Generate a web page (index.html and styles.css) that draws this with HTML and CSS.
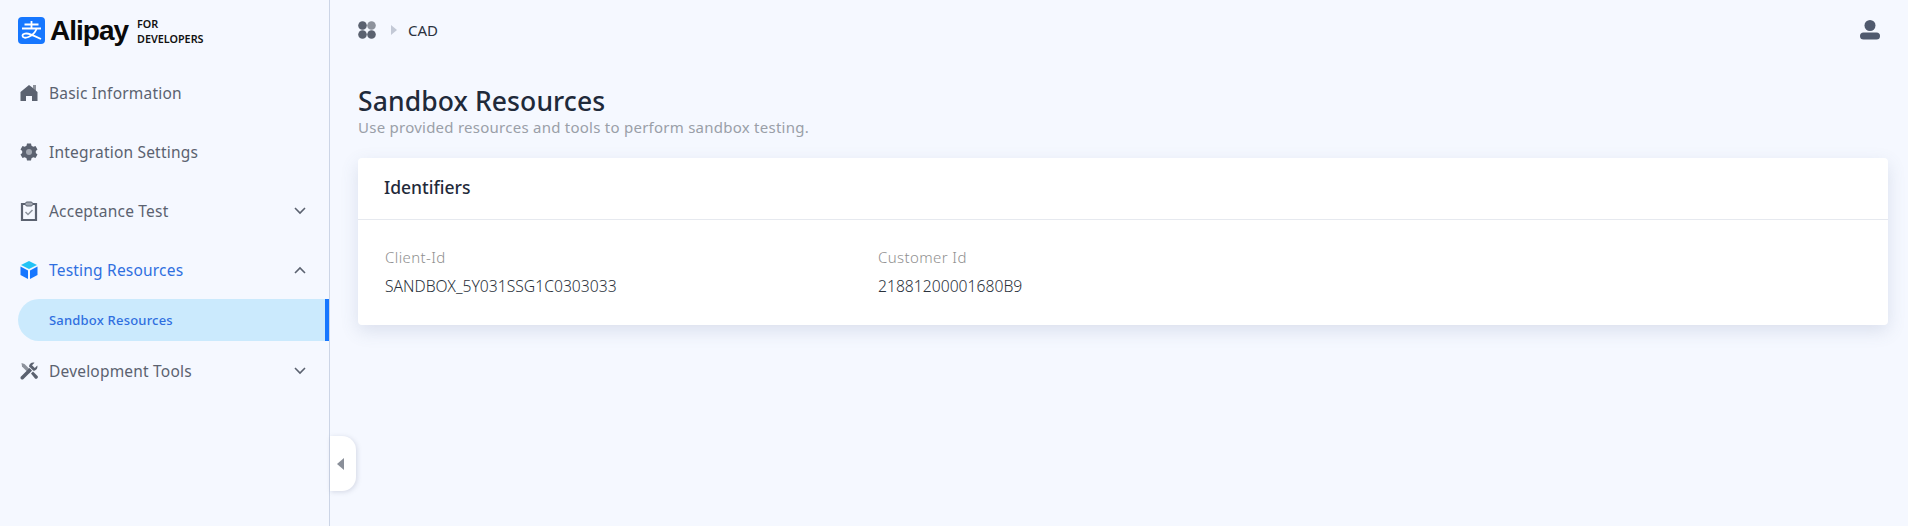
FILE: index.html
```html
<!DOCTYPE html>
<html lang="en">
  <head>
    <meta charset="utf-8">
    <meta name="viewport" content="width=device-width, initial-scale=1" />
    <title>Sandbox Resources | Alipay for Developers</title>
    <link rel="stylesheet" href="styles.css">
  </head>
  <body>
    <aside class="sidebar">
      <div class="logo">
        <svg class="logo-mark" width="27" height="27" viewBox="0 0 27 27">
          <rect width="27" height="27" rx="4" fill="#1677ff"/>
          <path d="M13.500 4v8M6.500 7.500h14M4 11.500h19" stroke="#fff" stroke-width="1.800" fill="none"/>
          <path d="M18.500 12c-1.500 4-4.500 6.500-8 8-2.800 1.200-6 1-6-1.200 0-2.300 4-3 8-1.500 3.500 1.300 7.500 3.200 10.500 4.700" stroke="#fff" stroke-width="1.800" fill="none"/>
        </svg>
        <span class="logo-name">Alipay</span>
        <span class="logo-sub">FOR<br>DEVELOPERS</span>
      </div>

      <nav class="menu">
        <a class="menu-item">
          <svg class="menu-icon" width="18" height="18" viewBox="0 0 18 18"><path d="M9 1 0.500 8V17h5.500v-5h6v5h5.500V8L16 6.800V1h-3v3z" fill="#5b6270"/><path d="M13 1h3v5.800L13 4.300z" fill="#8d929c"/></svg>
          <span>Basic Information</span>
        </a>
        <a class="menu-item">
          <svg class="menu-icon" width="18" height="18" viewBox="0 0 18 18"><path d="M7 .5h4l.5 2.300 1.800 1 2.200-.7 2 3.400-1.700 1.600v1.800l1.700 1.600-2 3.400-2.200-.7-1.800 1-.5 2.300H7l-.5-2.300-1.800-1-2.200.7-2-3.400 1.700-1.600V8.100L.5 6.500l2-3.400 2.200.7 1.800-1z" fill="#5b6270"/><circle cx="9" cy="9" r="3" fill="#a3a8b2"/></svg>
          <span>Integration Settings</span>
        </a>
        <a class="menu-item">
          <svg class="menu-icon" width="18" height="20" viewBox="0 0 18 20"><path d="M5 3H2v16h14V3h-3" fill="none" stroke="#5b6270" stroke-width="2.200"/><rect x="5.500" y="1" width="7" height="4" rx="1.500" fill="#a3a8b2" stroke="#5b6270"/><path d="m5.500 11 2.500 2.500 4.500-4.500" fill="none" stroke="#8d929c" stroke-width="1.500"/></svg>
          <span>Acceptance Test</span>
          <svg class="chevron" width="12" height="8" viewBox="0 0 12 8"><path d="m1 1 5 5 5-5" fill="none" stroke="#5b6270" stroke-width="1.600"/></svg>
        </a>
        <a class="menu-item menu-item-open">
          <svg class="menu-icon" width="18" height="18" viewBox="0 0 18 18"><path d="M9 0 17 4 9 8 1 4z" fill="#22c3f5"/><path d="M.5 5.500 8 9.500V18L.5 14z" fill="#1677ff"/><path d="M17.500 5.500 10 9.500V18l7.500-4z" fill="#1677ff"/></svg>
          <span>Testing Resources</span>
          <svg class="chevron" width="12" height="8" viewBox="0 0 12 8"><path d="m1 7 5-5 5 5" fill="none" stroke="#5b6270" stroke-width="1.600"/></svg>
        </a>
        <a class="submenu-item">Sandbox Resources</a>
        <a class="menu-item">
          <svg class="menu-icon" width="18" height="18" viewBox="0 0 18 18"><path d="M1.500 1 4.500 2l7 7-2.500 2.500-7-7z" fill="#8d929c"/><path d="M1 14.500 9.500 6l2.500 2.500L3.500 17c-.7.7-1.800.7-2.500 0s-.7-1.800 0-2.500z" fill="#5b6270"/><path d="M9 4.500C9 2 11.500 0 14.500.7l-2.500 2.500 2.800 2.800L17.300 3.500C18 6.300 16 8.800 13.500 8.800z" fill="#5b6270"/><path d="m11 11.500 2-2 4.500 4.500c.6.600.6 1.400 0 2l-.5.500c-.6.600-1.400.6-2 0z" fill="#5b6270"/></svg>
          <span>Development Tools</span>
          <svg class="chevron" width="12" height="8" viewBox="0 0 12 8"><path d="m1 1 5 5 5-5" fill="none" stroke="#5b6270" stroke-width="1.600"/></svg>
        </a>
      </nav>

      <button class="collapse" type="button"><span class="collapse-arrow"></span></button>
    </aside>

    <main class="content">
      <header class="topbar">
        <div class="crumbs">
          <svg width="18" height="18" viewBox="0 0 18 18">
            <circle cx="4.500" cy="4.500" r="4.300" fill="#5b6270"/>
            <circle cx="13.500" cy="4.500" r="4.300" fill="#8d929c"/>
            <circle cx="4.500" cy="13.500" r="4.300" fill="#5b6270"/>
            <circle cx="13.500" cy="13.500" r="4.300" fill="#5b6270"/>
          </svg>
          <span class="crumb-arrow"></span>
          <span class="crumb">CAD</span>
        </div>
        <svg class="user" width="20" height="20" viewBox="0 0 20 20">
          <circle cx="10" cy="5.500" r="5.500" fill="#505a6e"/>
          <rect x="0" y="12.500" width="20" height="7" rx="3.500" fill="#505a6e"/>
        </svg>
      </header>

      <h1 class="page-title">Sandbox Resources</h1>
      <p class="page-desc">Use provided resources and tools to perform sandbox testing.</p>

      <section class="card">
        <h2 class="card-title">Identifiers</h2>
        <div class="card-body">
          <div class="field">
            <div class="field-label">Client-Id</div>
            <div class="field-value">SANDBOX_5Y031SSG1C0303033</div>
          </div>
          <div class="field">
            <div class="field-label">Customer Id</div>
            <div class="field-value">21881200001680B9</div>
          </div>
        </div>
      </section>
    </main>
  </body>
</html>
```

FILE: styles.css
```css
html, body{
  height: 100%;
}

body{
  margin: 0;
  display: flex;
  min-height: 526px;
  background: #f5f8ff;
  font-family: "Noto Sans", "Open Sans", sans-serif;
  color: #1f2937;
  overflow: hidden;
}

/* Sidebar */
.sidebar{
  position: relative;
  flex: 0 0 329px;
  border-right: 1px solid #ccd5e6;
}

.logo{
  display: flex;
  align-items: center;
  height: 27px;
  padding: 17px 0 0 18px;
}

.logo-name{
  margin-left: 5px;
  font-family: "Liberation Sans", sans-serif;
  font-size: 28px;
  font-weight: 700;
  letter-spacing: -1px;
  color: #0a0a0a;
}

.logo-sub{
  margin-left: 9px;
  font-size: 10.800px;
  font-weight: 600;
  line-height: 15px;
  color: #111;
}

.menu{
  display: flex;
  flex-direction: column;
  padding-top: 19px;
}

.menu-item{
  display: flex;
  align-items: center;
  height: 59px;
  padding-left: 20px;
  padding-right: 23px;
  font-size: 15.500px;
  letter-spacing: .2px;
  color: #5b6270;
}

.menu-item > span{
  margin-left: 11px;
  flex: 1;
}

.menu-icon{
  flex: 0 0 18px;
}

.menu-item-open{
  color: #2f6fe0;
}

.submenu-item{
  display: flex;
  align-items: center;
  height: 42px;
  margin-left: 18px;
  padding-left: 31px;
  border-radius: 21px 0 0 21px;
  border-right: 4px solid #1677ff;
  background: #cbeafd;
  font-size: 13px;
  font-weight: 500;
  letter-spacing: .2px;
  color: #2f6fe0;
}

.collapse{
  position: absolute;
  left: 330px;
  top: 436px;
  width: 26px;
  height: 55px;
  padding: 0 0 0 7px;
  display: flex;
  align-items: center;
  border: 0;
  border-radius: 0 14px 14px 0;
  background: #fff;
  box-shadow: 1px 1px 5px rgba(90,100,130,.22);
}

.collapse-arrow{
  width: 0;
  height: 0;
  border-style: solid;
  border-width: 6px 7px 6px 0;
  border-color: transparent #8a8f99 transparent transparent;
}

/* Main area */
.content{
  flex: 1;
  padding: 0 20px 0 28px;
  min-width: 0;
}

.topbar{
  display: flex;
  align-items: center;
  justify-content: space-between;
  height: 60px;
  padding-right: 8px;
}

.crumbs{
  display: flex;
  align-items: center;
}

.crumb-arrow{
  margin-left: 15px;
  width: 0;
  height: 0;
  border-style: solid;
  border-width: 5.500px 0 5.500px 6px;
  border-color: transparent transparent transparent #c3c9d6;
}

.crumb{
  margin-left: 11px;
  font-size: 15px;
  color: #2b3240;
}

.page-title{
  margin: 24px 0 0;
  font-size: 26.500px;
  font-weight: 500;
  line-height: 35px;
  letter-spacing: .1px;
  color: #1f2a3a;
}

.page-desc{
  margin: 0 0 23px;
  font-size: 15px;
  line-height: 16px;
  letter-spacing: .25px;
  color: #9a9fa8;
}

.card{
  background: #fff;
  border-radius: 4px;
  box-shadow: 0 6px 18px rgba(80,100,140,.16);
}

.card-title{
  margin: 0;
  height: 61px;
  padding-left: 26px;
  border-bottom: 1px solid #e6e9ef;
  font-size: 17.500px;
  font-weight: 500;
  line-height: 58px;
  color: #1f2a3a;
}

.card-body{
  display: flex;
  padding: 27px 0 29px 27px;
}

.field{
  flex: 0 0 493px;
}

.field-label{
  font-size: 15px;
  font-weight: 300;
  line-height: 20px;
  letter-spacing: .4px;
  color: #8f8f8f;
}

.field-value{
  margin-top: 9px;
  font-size: 15.700px;
  font-weight: 300;
  line-height: 20px;
  color: #2b323c;
}
```
